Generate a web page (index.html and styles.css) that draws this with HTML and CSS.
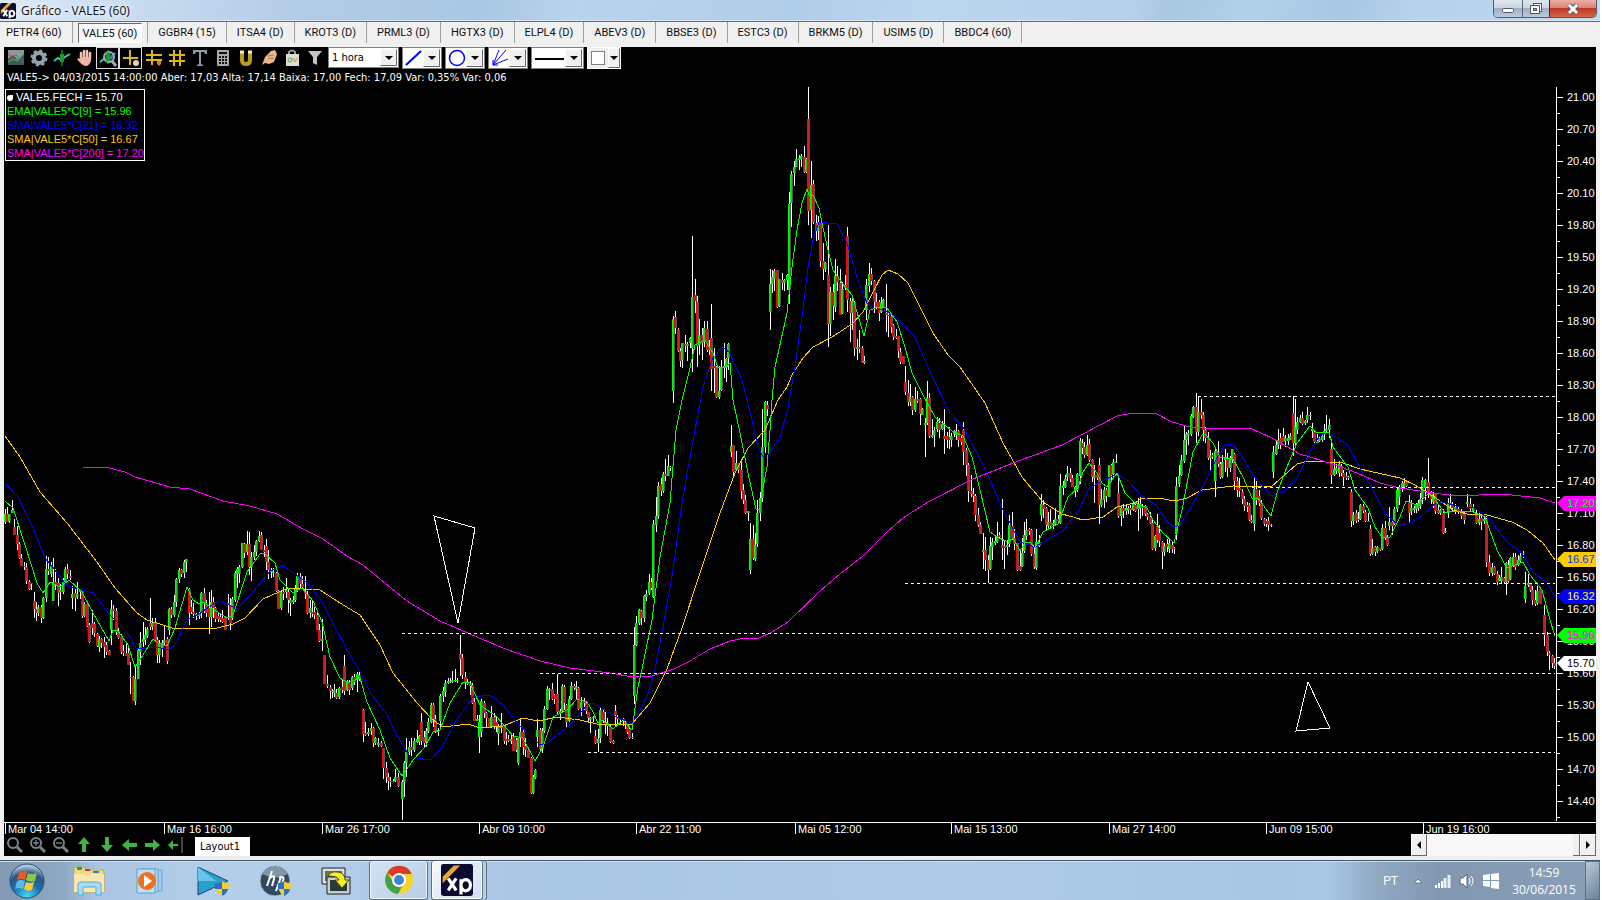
FILE: index.html
```
<!DOCTYPE html>
<html lang="pt">
<head>
  <meta charset="UTF-8">
  <meta name="viewport" content="width=device-width, initial-scale=1.0">
  <title>Gráfico - VALE5 (60)</title>
  <link rel="stylesheet" href="styles.css">
</head>

<body>
  <!-- Title bar -->
  <header class="titlebar">
    <svg class="app-logo" width="16" height="16" viewBox="0 0 40 40">
      <rect width="40" height="40" rx="4" fill="#0b0b30"/>
      <path d="M2 18 L20 0 L30 0 L2 28Z" fill="#e9a93a"/>
      <path d="M8 17L18 33M18 17L8 33" stroke="#fff" stroke-width="5"/>
      <path d="M24 38V19M24 25a6 7 0 1 1 0 3" stroke="#fff" stroke-width="5" fill="none"/>
    </svg>
    <h1 class="title">Gráfico - VALE5 (60)</h1>
    <div class="win-buttons">
      <button class="win-btn" aria-label="Minimizar">
        <svg width="14" height="12"><rect x="1.5" y="5.5" width="11" height="4" rx="1" fill="#fff" stroke="#535666"/></svg>
      </button>
      <button class="win-btn restore" aria-label="Restaurar">
        <svg width="14" height="13"><rect x="4.500" y="1.500" width="8" height="8" fill="#fff" stroke="#535666"/><rect x="1.500" y="3.500" width="9" height="8" fill="#fff" stroke="#535666"/><rect x="4.500" y="6.500" width="3" height="2" fill="#9ab" stroke="#535666"/></svg>
      </button>
      <button class="win-btn close" aria-label="Fechar">
        <svg width="14" height="12"><path d="M3 2L11 10M11 2L3 10" stroke="#535666" stroke-width="5"/><path d="M3 2L11 10M11 2L3 10" stroke="#fff" stroke-width="3"/></svg>
      </button>
    </div>
  </header>

  <!-- Symbols -->
  <nav class="tabs">
    <button class="tab">PETR4 (60)</button>
    <button class="tab active"><span>VALE5 (60)</span></button>
    <button class="tab">GGBR4 (15)</button>
    <button class="tab">ITSA4 (D)</button>
    <button class="tab">KROT3 (D)</button>
    <button class="tab">PRML3 (D)</button>
    <button class="tab">HGTX3 (D)</button>
    <button class="tab">ELPL4 (D)</button>
    <button class="tab">ABEV3 (D)</button>
    <button class="tab">BBSE3 (D)</button>
    <button class="tab">ESTC3 (D)</button>
    <button class="tab">BRKM5 (D)</button>
    <button class="tab">USIM5 (D)</button>
    <button class="tab">BBDC4 (60)</button>
  </nav>

  <main class="terminal">
    <div class="toolbar">
      <button class="tool" aria-label="Gráfico">
        <svg width="18" height="18"><rect x="1" y="1" width="16" height="15" fill="#8a9a9c"/><path d="M1 10L6 6L11 11L17 5V16H1Z" fill="#44585c"/><path d="M1 4L5 9L9 6L17 14" stroke="#f22" fill="none"/><path d="M1 13L6 10L10 12L17 4" stroke="#2d2" fill="none"/></svg>
      </button>
      <button class="tool" aria-label="Configurar">
        <svg width="18" height="18"><circle cx="9" cy="9" r="5" fill="none" stroke="#8fa3a8" stroke-width="4"/><circle cx="9" cy="9" r="7" fill="none" stroke="#8fa3a8" stroke-width="3" stroke-dasharray="3 2.500"/></svg>
      </button>
      <button class="tool" aria-label="Indicador">
        <svg width="18" height="18"><path d="M1 12L5 9L8 11L12 8L17 5" stroke="#2fd0c0" stroke-width="2" fill="none"/><path d="M9 1V17" stroke="#2c3"/><rect x="7" y="5" width="4" height="8" fill="#1a9a2a"/></svg>
      </button>
      <button class="tool" aria-label="Mover">
        <svg width="18" height="18"><path d="M5 10V4M8 9V2M11 9V2M14 10V4" stroke="#f3c3b6" stroke-width="2.500" stroke-linecap="round"/><path d="M4 8H15V12Q13 17 10 17Q6 17 1 10Q3 8 5 11Z" fill="#eeb5a8"/></svg>
      </button>
      <button class="tool on" aria-label="Lupa">
        <svg width="18" height="18"><path d="M1 13L5 10L9 12L16 4" stroke="#2fd0c0" stroke-width="2" fill="none"/><circle cx="10" cy="8" r="5" fill="#456" fill-opacity=".6" stroke="#9ab" stroke-width="2"/><path d="M13 12L17 17" stroke="#9ab" stroke-width="3"/><path d="M9 1V15" stroke="#2c3"/><rect x="7" y="4" width="4" height="8" fill="#1a9a2a"/></svg>
      </button>
      <button class="tool on" aria-label="Cursor">
        <svg width="18" height="18"><path d="M8 1V16M1 9H16" stroke="#d9b818" stroke-width="2"/><circle cx="14" cy="14" r="3" fill="#f0c8b8"/></svg>
      </button>
      <button class="tool" aria-label="Linhas">
        <svg width="18" height="18"><path d="M7 1V16M1 6H17M1 11H17" stroke="#d9b818" stroke-width="2"/><path d="M12 12h4v3l-2 2-2-2z" fill="#f07810"/></svg>
      </button>
      <button class="tool" aria-label="Grade">
        <svg width="18" height="18"><path d="M6 1V17M12 1V17M1 6H17M1 12H17" stroke="#d9b818" stroke-width="2"/></svg>
      </button>
      <button class="tool" aria-label="Texto">
        <svg width="18" height="18"><path d="M2 1H16V5H14L13 3H10V15L12 16V17H6V16L8 15V3H5L4 5H2Z" fill="#8b9da2"/></svg>
      </button>
      <button class="tool" aria-label="Calculadora">
        <svg width="18" height="18"><rect x="3" y="1" width="12" height="16" rx="1" fill="#a9a9a9"/><path d="M5 4H13" stroke="#111" stroke-width="2"/><path d="M5 8H13M5 11H13M5 14H13" stroke="#111" stroke-width="2" stroke-dasharray="2 1"/></svg>
      </button>
      <button class="tool" aria-label="Imã">
        <svg width="18" height="18"><path d="M5 2V11Q5 15 9 15Q13 15 13 11V2" stroke="#b99a1a" stroke-width="4" fill="none"/><path d="M3 3H7M11 3H15" stroke="#f4efb8" stroke-width="3"/></svg>
      </button>
      <button class="tool" aria-label="Borracha">
        <svg width="18" height="18"><path d="M2 16L5 8L11 2L15 1L17 5L14 13L9 15L5 14Z" fill="#e8b888"/><path d="M8 7L14 6M8 10L14 9" stroke="#b87848"/></svg>
      </button>
      <button class="tool" aria-label="Compra e venda">
        <svg width="18" height="18"><path d="M6 6V3Q9 0 12 3V6" stroke="#999" stroke-width="2" fill="none"/><rect x="3" y="5" width="13" height="12" fill="#dcdcd4"/><circle cx="7" cy="11" r="2" fill="none" stroke="#5a5"/><path d="M10 9L12 13L14 9" stroke="#e82" fill="none"/></svg>
      </button>
      <button class="tool" aria-label="Filtro">
        <svg width="18" height="18"><path d="M2 2H16L11 8V16L7 14V8Z" fill="#c4c4c4"/></svg>
      </button>

      <label class="period">
        <select aria-label="Periodicidade"><option>1 hora</option></select>
        <span class="drop"></span>
      </label>
      <button class="combo" aria-label="Linha">
        <svg width="19" height="18"><path d="M2 16L17 2" stroke="#00f" stroke-width="2"/></svg><span class="drop"></span>
      </button>
      <button class="combo" aria-label="Círculo">
        <svg width="19" height="18"><circle cx="10" cy="9" r="7.500" fill="none" stroke="#00f" stroke-width="1.500"/></svg><span class="drop"></span>
      </button>
      <button class="combo" aria-label="Leque">
        <svg width="19" height="18"><path d="M3 16L9 1M3 16L16 1M3 16L18 10" stroke="#00f" fill="none"/><path d="M3 11V16H8" stroke="#00f" fill="none"/></svg><span class="drop"></span>
      </button>
      <button class="combo wide" aria-label="Espessura">
        <svg width="32" height="18"><path d="M2 10H31" stroke="#000" stroke-width="2"/></svg><span class="drop"></span>
      </button>
      <button class="combo color" aria-label="Cor">
        <i class="swatch"></i><span class="drop"></span>
      </button>
    </div>

    <p class="quote">VALE5-&gt; 04/03/2015 14:00:00 Aber: 17,03 Alta: 17,14 Baixa: 17,00 Fech: 17,09 Var: 0,35% Var: 0,06</p>

    <div class="plot">
      <svg id="chart" viewBox="4 86 1592 748"></svg>
      <ul class="legend">
        <li class="white"><i class="mark"></i>VALE5.FECH = 15.70</li>
        <li class="green">EMA|VALE5*C[9] = 15.96</li>
        <li class="blue">SMA|VALE5*C[21] = 16.32</li>
        <li class="gold">SMA|VALE5*C[50] = 16.67</li>
        <li class="pink">SMA|VALE5*C[200] = 17.20</li>
      </ul>
    </div>

    <div class="bottombar">
      <button class="nav" aria-label="Zoom"><svg width="18" height="18"><circle cx="7" cy="7" r="5" fill="none" stroke="#76868a" stroke-width="2"/><path d="M11 11L16 16" stroke="#76868a" stroke-width="3"/></svg></button>
      <button class="nav" aria-label="Mais zoom"><svg width="18" height="18"><circle cx="7" cy="7" r="5" fill="none" stroke="#76868a" stroke-width="2"/><path d="M11 11L16 16" stroke="#76868a" stroke-width="3"/><path d="M4 7H10M7 4V10" stroke="#aab"/></svg></button>
      <button class="nav" aria-label="Menos zoom"><svg width="18" height="18"><circle cx="7" cy="7" r="5" fill="none" stroke="#76868a" stroke-width="2"/><path d="M11 11L16 16" stroke="#76868a" stroke-width="3"/><path d="M4 7H10" stroke="#aab"/></svg></button>
      <button class="nav" aria-label="Para cima"><svg width="18" height="18"><path d="M9 1L15 8H11V16H7V8H3Z" fill="#3db544"/></svg></button>
      <button class="nav" aria-label="Para baixo"><svg width="18" height="18"><path d="M9 16L15 9H11V1H7V9H3Z" fill="#3db544"/></svg></button>
      <button class="nav" aria-label="Esquerda"><svg width="18" height="18"><path d="M1 9L8 3V7H16V11H8V15Z" fill="#3db544"/></svg></button>
      <button class="nav" aria-label="Direita"><svg width="18" height="18"><path d="M16 9L9 3V7H1V11H9V15Z" fill="#3db544"/></svg></button>
      <button class="nav" aria-label="Início"><svg width="18" height="18"><path d="M1 9L6 4V8H11V10H6V14Z" fill="#3db544"/><path d="M15 1V17" stroke="#888"/></svg></button>
      <button class="layout-tab">Layout1</button>
      <div class="scroll">
        <button class="scroll-btn left" aria-label="Rolar à esquerda"></button>
        <span class="thumb"></span>
        <button class="scroll-btn right" aria-label="Rolar à direita"></button>
      </div>
    </div>
  </main>

  <!-- Windows taskbar -->
  <footer class="taskbar">
    <button class="task start" aria-label="Iniciar">
      <svg width="36" height="36" viewBox="0 0 36 36">
        <defs><radialGradient id="orb" cx=".5" cy=".95" r=".9"><stop offset="0" stop-color="#3fe0ff"/><stop offset=".45" stop-color="#1b6fae"/><stop offset=".75" stop-color="#2a5580"/><stop offset="1" stop-color="#b5cde0"/></radialGradient></defs>
        <circle cx="18" cy="18" r="17" fill="url(#orb)" stroke="#2b4f73"/>
        <path d="M10 10Q14 7 18 9L16 17Q12 15 8 17Z" fill="#ee5a24"/>
        <path d="M19 10Q23 12 28 10L26 18Q21 20 17 17Z" fill="#8cc83c"/>
        <path d="M8 18Q12 16 16 18L14 26Q10 24 6 26Z" fill="#5bb8f0"/>
        <path d="M17 19Q21 21 25 19L23 27Q18 29 15 26Z" fill="#fccc2c"/>
      </svg>
    </button>
    <button class="task" aria-label="Explorador">
      <svg width="34" height="32" viewBox="0 0 34 32"><path d="M2 4Q2 2 4 2H12L14 5H30Q32 5 32 7V27H2Z" fill="#f2d98a" stroke="#c9a94e"/><path d="M5 2h5v3H5z" fill="#2a3"/><path d="M13 4h5v2h-5z" fill="#d33"/><path d="M21 6h6v2h-6z" fill="#28c"/><path d="M2 9H32V27H2Z" fill="#f8e8ac"/><path d="M6 20Q6 17 9 17H26Q29 17 29 20V30H24V22H11V30H6Z" fill="#a9dcf4" stroke="#5aa9d0"/></svg>
    </button>
    <button class="task" aria-label="Media Player">
      <svg width="32" height="30" viewBox="0 0 32 30"><path d="M10 4H27V25H10Z" fill="#9fcbe8" stroke="#6fa8d0"/><path d="M6 3H23V26H6Z" fill="#aed4ee" stroke="#6fa8d0"/><path d="M2 3H20V27H2Z" fill="#bcdff5" stroke="#5f9fca"/><circle cx="12" cy="15" r="9" fill="#f0701c"/><path d="M9 9L17 15L9 21Z" fill="#fff"/></svg>
    </button>
    <button class="task" aria-label="Player">
      <svg width="34" height="32" viewBox="0 0 34 32"><path d="M2 2L32 16L2 30Z" fill="#2a9fd0" stroke="#246"/><path d="M2 2L20 16L2 16Z" fill="#69c4ea"/><path d="M19 18Q24 18 26 16Q28 18 33 18Q33 28 26 31Q19 28 19 18Z" fill="#f8cc2c"/><path d="M26 16Q24 18 19 18V24H26ZM26 24H32Q31 29 26 31Z" fill="#2a6fc8"/></svg>
    </button>
    <button class="task" aria-label="HP">
      <svg width="34" height="32" viewBox="0 0 34 32"><circle cx="17" cy="16" r="15" fill="#33495f" stroke="#aab8c4"/><path d="M4 9A15 15 0 0 1 30 9Q17 16 4 9Z" fill="#7f95a8"/><path d="M14 6L9 21M12 13Q17 9 16 14L14 21M23 12L18 26M21 13Q27 10 25 16Q23 22 19 20" stroke="#fff" stroke-width="2" fill="none"/><path d="M20 18Q24 18 26 16Q28 18 33 18Q33 28 26 31Q20 28 20 18Z" fill="#f8cc2c"/><path d="M26 16Q24 18 20 18V24H26ZM26 24H32Q31 29 26 31Z" fill="#2a6fc8"/></svg>
    </button>
    <button class="task" aria-label="Fotos">
      <svg width="34" height="30" viewBox="0 0 34 30"><path d="M2 2H25V18H2Z" fill="#ddd" stroke="#222"/><path d="M5 5H22V15H5Z" fill="#576"/><path d="M7 11H30V28H7Z" fill="#ccc" stroke="#222"/><path d="M10 14H27V25H10Z" fill="#253c38"/><path d="M8 10Q10 5 18 6Q25 7 25 14H29L22 22L15 14H19Q18 10 8 10Z" fill="#f8ee20" stroke="#443"/></svg>
    </button>
    <button class="task open" aria-label="Chrome">
      <svg width="30" height="30" viewBox="0 0 30 30"><circle cx="15" cy="15" r="14" fill="#f8d12c"/><path d="M15 15L3 8A14 14 0 0 1 28 9H15Z" fill="#dc3a2c"/><path d="M3 8A14 14 0 0 0 14 29L20 18L10 18Z" fill="#3fa34a"/><circle cx="15" cy="15" r="7" fill="#fff"/><circle cx="15" cy="15" r="5" fill="#3f83d4"/></svg>
    </button>
    <button class="task open stack" aria-label="XP">
      <svg width="32" height="32" viewBox="0 0 40 40"><rect width="40" height="40" rx="3" fill="#0b0b30"/><path d="M2 16L16 2H24L2 24Z" fill="#e9a93a"/><path d="M9 18L19 33M19 18L9 33" stroke="#fff" stroke-width="4"/><path d="M25 38V19M25 25a6 7 0 1 1 0 3" stroke="#fff" stroke-width="4" fill="none"/></svg>
    </button>
    <div class="tray">
      <span class="lang">PT</span>
      <svg class="tray-up" width="10" height="6"><path d="M1 5L5 1L9 5Z" fill="#fff" stroke="#678"/></svg>
      <svg width="18" height="16"><path d="M2 15V12M5 15V10M8 15V8" stroke="#fff" stroke-width="2"/><path d="M11 15V5M15 15V2" stroke="#e8eef4" stroke-width="3"/></svg>
      <svg width="18" height="16"><path d="M2 5H5L9 1V15L5 11H2Z" fill="#fff" stroke="#567"/><path d="M11 5Q13 8 11 11M13 3Q17 8 13 13" stroke="#fff" fill="none"/></svg>
      <svg width="18" height="16"><path d="M1 2L8 1V7H1ZM9 1L17 0V7H9ZM1 8H8V14L1 13ZM9 8H17V16L9 15Z" fill="#fff"/></svg>
      <div class="clock"><span>14:59</span><span>30/06/2015</span></div>
      <button class="show-desktop" aria-label="Mostrar área de trabalho"></button>
    </div>
  </footer>

  <script src="chart.js"></script>
</body>
</html>
```

FILE: styles.css
```
* {
    box-sizing: border-box;
}

body {
    margin: 0;
    padding-right: 2px;
    background-color: #fff;
    font-family: Roboto, sans-serif;
    font-size: 12px;
}

button {
    font-family: inherit;
    font-size: inherit;
    margin: 0;
    padding: 0;
    border: 0;
    background: none;
}

svg {
    display: block;
}

/* title bar */
.titlebar {
    display: flex;
    align-items: center;
    gap: 5px;
    height: 22px;
    border-bottom: 1px solid #5d6b7c;
    box-shadow: inset 0 -1px 0 #dbe8f6;
    background: linear-gradient(100deg, #dbe9f7 0, #c9ddf1 8%, #b4cde6 18%, #a9c7e4 30%, #b8d3ec 36%, #b0cde9 50%, #bcd6ee 58%, #b5cfea 71%, #a9c6e2 73%, #b3d0ea 78%, #a9c7e4 84%, #b5d1ec 88%, #c3d9f0 100%);
}

.title {
    flex: 1;
    margin: 0;
    font-family: "Open Sans", sans-serif;
    font-size: 12px;
    font-weight: 400;
    line-height: 20px;
    color: #111;
    text-shadow: 0 0 6px #fff, 0 0 6px #fff;
}

.win-buttons {
    display: flex;
    align-self: flex-start;
    height: 18px;
    margin-right: 3px;
    border: 1px solid #4f5b6b;
    border-top: 0;
    border-radius: 0 0 5px 5px;
    overflow: hidden;
}

.win-btn {
    display: flex;
    align-items: center;
    justify-content: center;
    width: 28px;
    background: linear-gradient(#dfe8f1 0, #cbd6e2 45%, #9fb0c3 50%, #b9cbdd 100%);
}

.win-btn.restore {
    width: 27px;
    border-left: 1px solid #5b6878;
}

.win-btn.close {
    width: 47px;
    border-left: 1px solid #5b1a14;
    background: linear-gradient(#eab0a6 0, #dd8474 45%, #bf3a22 50%, #cf6444 100%);
}

/* symbol tabs */
.tabs {
    display: flex;
    align-items: flex-start;
    height: 25px;
    background-color: #f0f0f0;
}

.tab {
    height: 21px;
    padding: 0 10px;
    border-right: 1px solid #a0a0a0;
    font-size: 11px;
    line-height: 20px;
    color: #111;
}

.tab:first-child {
    padding-left: 6px;
}

.tab.active {
    padding: 0 5px;
}

.tab.active span {
    display: block;
    height: 20px;
    margin-top: 1px;
    padding: 0 4px;
    border: 1px solid #fff;
    border-top-color: #696969;
    border-left-color: #696969;
    background-color: #f8f8f8;
}

/* black work area */
.terminal {
    padding: 0 4px;
    border-bottom: 4px solid #eee;
    background: linear-gradient(#000, #000) content-box, #f0f0f0;
    color: #fff;
}

.toolbar {
    display: flex;
    height: 22px;
}

.tool {
    display: flex;
    align-items: center;
    justify-content: center;
    width: 23px;
    border: 1px solid transparent;
}

.tool.on {
    border-color: #ddd;
}

.period {
    display: flex;
    width: 71px;
    height: 21px;
    margin-left: 2px;
    padding: 1px;
    border: 1px solid #808080;
    background-color: #fff;
}

.period select {
    flex: 1;
    min-width: 0;
    padding: 0 2px;
    border: 0;
    appearance: none;
    background: none;
    font-family: "DejaVu Sans Condensed", sans-serif;
    font-size: 11px;
    color: #000;
}

.drop {
    display: flex;
    align-items: center;
    justify-content: center;
    width: 17px;
    border: 1px solid #fff;
    border-right-color: #696969;
    border-bottom-color: #696969;
    background-color: #f0f0f0;
}

.drop::after {
    content: "";
    border: 4px solid transparent;
    border-top-color: #000;
    border-bottom: 0;
}

.combo {
    display: flex;
    justify-content: space-between;
    width: 40px;
    height: 22px;
    margin-left: 3px;
    padding: 1px;
    border: 1px solid #808080;
    background-color: #fff;
}

.combo.wide {
    width: 53px;
}

.combo.color {
    width: 34px;
    padding: 0;
    border-color: #fff;
    background-color: #f0f0f0;
}

.color .drop {
    width: 12px;
}

.swatch {
    width: 14px;
    height: 14px;
    margin: 3px;
    border: 1px solid #808080;
    background-color: #fff;
}

.quote {
    margin: 0;
    padding-left: 3px;
    font-family: "DejaVu Sans Condensed", sans-serif;
    font-size: 11px;
    line-height: 17px;
}

/* chart */
.plot {
    position: relative;
}

#chart {
    width: 100%;
    height: auto;
    font-family: "Liberation Sans", sans-serif;
    font-size: 11px;
}

.legend {
    position: absolute;
    top: 3px;
    left: 1px;
    width: 140px;
    margin: 0;
    padding: 0 1px;
    border: 1px solid #fff;
    background-color: #000;
    list-style: none;
    font-family: "Liberation Sans", sans-serif;
    font-size: 11px;
    line-height: 14px;
    white-space: nowrap;
}

.mark {
    display: inline-block;
    width: 6px;
    height: 6px;
    margin-right: 3px;
    border-radius: 3px 0 3px 3px;
    background-color: #fff;
}

.white { color: #fff; }
.green { color: #0f0; }
.blue { color: #00f; }
.gold { color: #fc0; }
.pink { color: #f0f; }

.bottombar {
    display: flex;
    align-items: center;
    height: 22px;
    padding-left: 2px;
}

.nav {
    width: 23px;
}

.layout-tab {
    align-self: flex-end;
    width: 55px;
    height: 19px;
    margin-left: 5px;
    padding-left: 5px;
    background-color: #fff;
    font-family: "DejaVu Sans Condensed", sans-serif;
    font-size: 11px;
    text-align: left;
    color: #000;
}

.scroll {
    display: flex;
    align-self: stretch;
    width: 185px;
    margin-left: auto;
    background-color: #f8f8f8;
}

.scroll-btn {
    display: flex;
    align-items: center;
    justify-content: center;
    width: 16px;
    border: 1px solid #fff;
    border-right-color: #696969;
    border-bottom-color: #696969;
    background-color: #f0f0f0;
}

.scroll-btn::after {
    content: "";
    border: 4px solid transparent;
}

.scroll-btn.left::after {
    border-right-color: #000;
    border-left: 0;
}

.scroll-btn.right::after {
    border-left-color: #000;
    border-right: 0;
}

.thumb {
    width: 7px;
    margin-left: auto;
    border-right: 1px solid #696969;
    border-bottom: 1px solid #696969;
    background-color: #f0f0f0;
}

/* taskbar */
.taskbar {
    display: flex;
    align-items: stretch;
    height: 40px;
    border-top: 1px solid #46566a;
    box-shadow: inset 0 1px 0 #cfe0f0;
    background: linear-gradient(90deg, #8199b2 0, #8fa9c4 4%, #a9c5e2 6%, #b3cfea 14%, #a9c6e4 35%, #afcbe8 60%, #a7c6e4 80%, #a9c8e6 83%, #8fa9c4 86%, #8298b0 90%, #889fb8 100%);
}

.task {
    display: flex;
    align-items: center;
    justify-content: center;
    width: 62px;
}

.task.start {
    width: 54px;
    margin-right: 4px;
}

.task.open {
    width: 59px;
    border: 1px solid #5c7288;
    border-top: 0;
    border-radius: 3px;
    box-shadow: inset 0 0 0 1px #eef5fc;
    background: linear-gradient(135deg, #d5e3f1, #b6cde6);
}

.task.stack {
    width: 52px;
    margin-left: 3px;
    background: linear-gradient(135deg, #f4f8fc, #cfe0f1);
    box-shadow: inset 0 0 0 1px #fff, 3px 0 0 #b8cfe6, 4px 0 0 #5c7288;
}

.task:nth-child(6) {
    margin-right: 1px;
}

.tray {
    display: flex;
    align-items: center;
    gap: 6px;
    margin-left: auto;
    color: #fff;
}

.lang {
    margin-right: 9px;
}

.tray-up {
    margin-right: 5px;
}

.clock {
    display: flex;
    flex-direction: column;
    align-items: center;
    width: 76px;
    font-family: "Open Sans", sans-serif;
    font-size: 12px;
    line-height: 17px;
}

.tray > .show-desktop {
    align-self: stretch;
    width: 15px;
    margin-left: -3px;
    border: 1px solid #5c7288;
    background: linear-gradient(135deg, #b8c8d8, #6d8298);
}
```

FILE: chart.js
```
const chart = document.getElementById('chart')

// x, high, low, body top, body bottom, g (up) / r (down)
const candles = `
5 509 524 514 522 g,7 507 522 514 522 r,9 514 523 514 521 g,12 500 513 510 513 g,14 519 535 527 535 r,17 526 550 535 544 r,19 542 559 544 558 r,21 554 566 558 566 r,24 562 570 566 567 r,26 563 584 567 581 r,29 580 590 582 589 r,31 583 590 583 584 r,
34 592 618 601 609 r,36 602 621 609 613 r,38 605 616 607 613 g,41 605 623 607 618 r,43 597 619 598 618 g,46 556 602 569 598 g,48 557 575 569 571 r,51 562 577 566 574 g,53 558 601 582 601 g,55 569 590 582 585 r,58 578 606 583 593 r,60 584 600 590 592 g,
63 578 594 582 592 g,65 567 584 569 582 g,67 564 579 569 574 r,70 570 580 576 578 r,72 586 609 594 598 g,75 589 611 593 598 r,77 582 599 594 597 g,80 589 599 590 592 g,82 590 618 591 616 r,84 602 617 604 616 g,87 602 627 604 626 r,89 623 643 625 642 r,
92 610 635 623 628 r,94 622 637 624 633 r,97 633 647 634 646 r,99 636 652 639 647 g,101 638 648 639 643 r,104 637 658 642 647 r,106 642 655 645 652 r,109 650 655 651 655 r,111 600 645 609 630 g,113 605 620 609 611 r,116 608 635 611 632 r,118 628 639 631 638 r,
121 634 654 637 652 r,123 645 656 651 653 r,126 642 656 653 656 r,128 647 665 653 665 r,130 662 694 677 678 r,133 676 701 677 701 r,135 667 705 679 701 g,138 648 679 650 679 g,140 632 665 643 652 g,143 622 647 639 642 g,145 627 645 635 640 g,147 627 638 629 636 g,
150 598 630 623 627 r,152 618 630 623 627 g,155 618 642 623 640 r,157 637 663 640 655 r,159 640 663 643 655 g,162 640 657 643 648 g,164 626 645 640 643 g,167 637 664 639 661 r,169 608 635 609 630 g,171 607 618 609 615 r,174 595 617 602 615 g,176 578 607 579 602 g,
179 568 583 570 579 g,181 569 577 570 574 r,184 560 578 562 573 g,186 559 572 559 562 g,189 588 625 589 613 r,191 600 614 607 612 r,193 603 618 612 614 r,196 613 620 614 616 g,199 612 619 614 616 g,201 592 618 593 613 g,204 588 613 593 603 r,206 600 617 603 613 r,
209 592 634 608 617 r,211 590 627 602 617 g,213 597 618 602 608 r,215 607 622 608 619 r,218 613 622 616 619 r,220 613 622 617 620 r,222 610 623 618 622 r,225 616 630 617 630 r,228 594 620 603 605 r,230 598 630 606 623 r,232 597 620 599 618 g,235 571 602 573 600 g,
237 567 588 569 574 g,239 565 583 567 574 g,242 543 568 543 567 g,244 543 558 544 553 r,247 531 555 544 552 g,249 532 575 544 567 r,251 552 581 557 567 g,254 545 560 552 557 g,256 540 556 541 552 g,259 531 542 536 541 g,261 532 550 535 550 r,264 545 557 550 552 r,
266 539 570 546 562 r,268 550 579 562 570 r,271 568 578 570 572 g,273 568 577 572 573 g,276 572 592 573 591 r,278 590 609 591 609 r,281 590 610 592 608 g,283 587 600 592 594 r,286 578 598 590 592 g,288 588 613 592 600 r,290 598 616 600 603 g,293 596 604 600 602 g,
295 585 602 588 600 g,297 573 592 576 590 g,300 573 588 577 584 r,302 576 588 584 587 r,305 576 599 591 594 r,307 591 614 594 613 r,310 600 618 608 613 g,312 601 617 612 614 r,314 607 619 612 615 r,317 610 630 615 630 r,319 624 642 630 641 r,322 619 651 639 641 g,
324 655 684 655 684 r,327 675 688 684 686 r,330 685 699 687 691 r,332 689 698 691 692 r,334 684 697 690 693 g,336 689 699 693 698 r,339 687 699 688 697 g,342 680 693 687 690 r,344 655 695 666 691 r,347 680 691 681 690 g,349 680 695 683 690 r,352 676 690 677 688 g,
354 674 685 677 682 r,357 672 692 674 680 g,359 670 681 675 679 g,363 709 742 710 734 r,365 722 736 733 735 r,368 728 736 732 734 g,371 723 735 728 731 g,373 727 747 728 743 r,375 737 745 738 743 g,378 738 747 743 745 g,381 741 747 743 746 r,383 748 779 748 768 r,
386 762 783 768 777 r,388 773 790 777 781 r,390 777 787 781 782 r,393 779 782 781 782 r,395 769 782 777 781 g,398 773 787 777 786 r,402 780 820 782 799 g,404 761 797 763 782 g,406 738 777 752 763 g,409 741 757 747 752 g,411 738 756 747 750 r,414 738 752 741 750 g,
417 730 743 739 742 g,419 735 745 736 742 g,421 713 745 722 741 r,424 731 747 737 743 r,426 728 747 731 742 g,428 718 733 722 731 g,431 703 723 705 722 g,433 703 727 705 719 r,435 715 733 719 732 r,438 728 736 730 732 g,440 694 727 696 721 g,443 687 702 691 696 g,
445 680 697 683 692 g,448 678 684 681 683 g,450 678 683 681 682 g,452 671 683 680 682 g,455 669 682 680 681 g,457 678 683 680 681 g,460 635 676 654 659 r,462 654 679 658 675 r,465 672 689 677 682 r,467 679 685 682 684 r,470 681 695 683 686 r,472 683 704 685 703 r,
474 698 721 702 721 r,477 715 721 719 721 g,479 715 753 722 737 g,481 699 737 701 732 g,484 701 718 703 713 r,486 712 727 713 718 r,489 718 728 718 727 r,491 706 728 717 727 g,494 713 729 717 727 r,496 717 732 722 727 r,498 724 745 727 734 g,501 713 733 725 728 g,
504 725 744 727 741 r,506 732 745 739 741 r,508 735 742 739 741 r,511 733 744 739 741 g,513 733 751 736 751 r,516 738 752 740 750 r,518 737 765 738 763 g,520 720 747 732 738 g,523 729 755 732 747 r,525 738 757 746 750 r,528 747 758 750 758 r,531 757 794 758 793 r,
533 775 794 777 793 g,535 769 779 770 778 g,537 719 747 730 737 g,540 728 750 730 749 r,542 728 753 731 749 g,544 706 733 709 731 g,547 686 710 689 709 g,549 688 700 689 691 g,552 683 700 689 699 r,554 694 704 695 699 r,557 674 715 694 712 r,560 709 720 711 713 g,
562 684 713 686 711 g,564 685 710 687 703 r,566 704 727 705 722 r,569 696 722 699 721 g,571 682 700 686 699 g,574 684 690 686 688 r,576 681 700 687 689 g,578 687 710 688 709 r,581 697 716 702 708 g,584 698 710 701 703 r,586 701 714 703 711 r,588 712 723 712 718 r,
590 717 733 718 720 g,593 716 722 717 718 g,595 730 744 736 743 r,598 729 752 739 743 g,600 707 743 710 738 g,603 710 723 712 720 r,605 712 734 722 724 r,607 718 736 723 726 r,610 725 743 727 742 r,613 740 744 741 743 r,615 705 727 711 715 r,617 715 726 717 719 r,
620 718 724 719 720 r,623 718 726 719 721 r,625 721 729 722 724 r,627 725 734 726 732 r,629 728 739 729 738 r,632 733 739 737 738 r,634 627 704 645 696 g,636 616 646 623 645 g,639 609 625 610 623 g,641 610 625 611 618 r,644 595 622 596 618 g,646 590 601 594 597 g,
649 574 595 582 593 g,651 578 590 582 588 r,653 520 598 524 597 g,656 497 532 516 525 g,658 482 519 486 516 g,661 478 496 484 491 r,663 472 493 474 491 g,665 459 481 474 476 r,668 455 476 466 476 g,670 466 471 467 468 r,673 316 403 319 391 g,675 311 334 317 328 r,
678 328 352 329 351 r,680 348 367 351 361 r,682 343 368 343 360 g,685 335 352 344 346 r,687 342 361 344 346 g,690 337 348 338 343 g,692 236 372 297 348 g,695 279 313 295 301 r,697 296 367 302 346 r,699 319 355 335 345 g,702 328 360 335 343 r,704 321 347 328 342 g,
707 321 352 329 350 r,709 340 355 348 350 r,711 304 391 338 369 r,714 348 393 366 368 r,716 366 398 367 397 r,719 366 399 391 397 g,721 360 391 367 390 g,724 343 378 366 368 g,726 358 382 359 367 g,728 343 370 344 358 g,731 425 457 446 452 g,733 445 478 445 472 r,
736 451 471 463 470 g,738 463 473 463 470 r,741 460 499 470 491 r,743 484 504 490 500 r,745 495 514 500 513 r,748 511 521 511 513 g,750 523 574 539 570 g,753 525 560 539 558 r,755 533 561 545 559 g,757 500 547 513 544 g,760 492 521 498 513 g,762 409 502 447 498 g,
765 401 453 402 447 g,767 401 416 405 409 r,770 269 330 284 312 g,772 270 293 277 284 g,774 269 291 271 279 g,777 270 308 270 307 r,779 279 307 279 306 g,782 273 290 280 283 r,784 279 291 280 283 g,787 274 290 275 280 g,789 192 304 204 290 g,791 171 227 174 203 g,
794 161 186 167 173 g,796 149 167 159 167 g,799 155 170 158 160 g,801 154 167 156 159 g,804 146 173 157 172 r,806 158 173 159 172 g,808 87 225 119 211 r,811 161 238 185 210 g,813 180 224 184 222 r,816 215 241 223 231 r,818 216 240 222 231 g,820 222 267 223 261 r,
823 243 280 261 269 r,825 262 272 263 269 g,828 225 347 275 324 r,830 287 336 292 324 g,833 284 320 292 306 r,835 259 312 276 307 g,837 266 291 276 282 r,840 269 315 283 315 r,842 282 314 289 313 g,845 275 290 285 288 r,847 227 312 236 300 r,850 298 342 301 313 r,
852 297 330 301 313 g,854 301 356 302 348 r,857 339 360 347 349 g,859 330 353 347 349 r,862 346 363 348 363 r,864 356 364 361 363 g,866 279 320 285 310 g,869 263 292 274 286 g,871 268 285 274 281 r,874 280 313 281 302 r,876 293 310 302 307 r,879 300 321 302 313 r,
881 297 313 303 312 g,883 299 308 300 307 g,886 284 332 313 315 r,888 313 337 315 316 r,891 314 333 316 327 r,893 324 340 325 337 r,896 329 339 336 338 r,898 336 358 336 351 r,900 348 364 352 362 r,903 356 364 356 364 r,905 366 395 382 392 r,908 380 406 393 402 r,
910 384 406 397 402 g,912 396 415 397 410 r,915 387 412 399 410 g,917 391 403 399 401 r,920 398 425 399 414 r,922 408 415 409 415 g,925 418 457 423 425 g,927 381 425 398 423 g,929 393 438 398 436 r,932 419 438 435 437 g,934 427 447 430 435 g,937 417 432 422 429 g,
939 418 438 423 430 r,942 421 430 424 429 g,944 409 454 436 439 r,947 432 448 436 440 r,949 427 449 437 440 r,951 433 447 436 440 g,954 430 437 431 434 g,956 424 440 431 435 g,958 430 447 431 440 r,961 435 445 438 442 r,963 422 465 430 452 r,966 448 476 450 465 r,
968 463 502 465 491 r,971 475 497 491 494 r,973 488 502 494 496 r,975 494 521 496 515 r,978 508 527 515 525 r,980 522 534 525 534 r,983 533 569 550 552 g,985 537 571 550 560 r,988 555 583 560 570 r,990 537 570 546 569 g,992 538 560 542 547 g,995 537 545 541 543 g,
997 522 543 536 542 g,999 532 539 535 537 r,1002 499 560 545 548 r,1004 540 569 546 548 r,1007 540 555 545 547 g,1009 515 547 525 544 g,1012 512 540 526 538 r,1014 529 550 538 544 r,1017 543 571 543 570 r,1020 550 571 566 570 r,1022 538 567 553 566 g,1024 522 553 535 551 g,
1026 519 540 530 536 g,1029 528 535 529 531 r,1031 529 556 530 554 r,1034 547 569 554 567 r,1036 529 570 542 568 g,1039 535 547 542 546 g,1041 494 521 504 515 g,1043 500 518 505 509 r,1046 507 531 508 525 r,1048 512 528 522 526 g,1050 509 529 522 526 r,1053 520 529 523 525 g,
1055 508 526 519 524 g,1058 515 524 519 521 r,1060 474 524 486 523 g,1063 481 495 486 488 g,1065 475 488 479 487 g,1067 466 481 473 477 g,1070 468 482 473 479 r,1072 475 487 478 487 r,1075 486 497 487 491 g,1077 473 492 474 490 g,1080 438 484 441 476 g,1082 439 454 443 448 r,
1084 442 458 447 455 r,1087 435 456 445 455 g,1089 439 462 444 460 r,1092 459 482 460 477 r,1094 465 503 475 478 g,1097 473 480 475 478 r,1099 458 524 465 505 r,1101 489 507 499 505 g,1104 487 508 490 500 g,1106 488 502 490 496 r,1109 465 497 465 497 g,1111 464 480 465 475 r,
1113 459 479 462 474 g,1116 454 463 462 463 g,1118 476 518 493 516 r,1121 505 526 508 516 g,1123 504 518 508 511 r,1126 505 515 508 511 g,1128 506 514 508 510 g,1130 505 515 508 510 r,1133 502 511 503 510 g,1135 502 512 505 511 r,1138 498 531 505 509 g,1140 497 519 504 508 g,
1142 504 516 506 508 r,1145 505 516 506 514 r,1147 513 520 514 517 r,1150 512 524 517 523 r,1152 520 550 523 549 r,1155 535 551 536 548 g,1157 514 543 526 540 r,1159 525 547 533 541 r,1162 541 569 542 552 r,1164 543 556 546 552 g,1167 539 552 544 547 r,1169 538 553 543 549 g,
1172 541 553 545 549 r,1174 547 554 548 549 r,1176 477 540 486 534 g,1179 465 487 476 484 g,1181 455 476 460 475 g,1184 426 463 440 461 g,1186 432 455 434 440 g,1188 430 445 433 435 g,1191 414 436 416 434 g,1193 406 418 407 417 g,1196 393 443 407 432 r,1198 397 436 412 432 g,
1201 399 419 412 415 r,1203 412 441 415 430 r,1205 427 443 430 438 r,1208 432 460 439 458 r,1210 450 470 455 458 g,1212 453 459 455 457 r,1215 448 497 451 481 g,1218 441 467 452 464 r,1220 462 479 464 477 r,1222 455 478 462 477 g,1225 449 472 457 460 g,1227 453 477 458 468 r,
1230 456 472 459 468 g,1232 449 463 449 460 g,1234 453 490 454 481 r,1237 477 497 481 490 r,1239 478 497 488 491 r,1242 489 504 492 499 r,1244 496 511 499 506 r,1247 502 512 505 507 r,1249 503 521 505 520 r,1251 515 523 520 522 r,1254 477 531 489 524 g,1256 481 505 489 500 r,
1259 490 506 496 503 r,1261 500 520 503 518 r,1264 518 526 519 524 r,1266 519 527 521 524 r,1268 517 531 521 525 r,1271 524 527 525 526 g,1273 446 478 452 472 g,1276 440 455 445 454 g,1278 429 449 440 445 g,1280 433 449 438 445 r,1283 428 442 436 442 r,1285 435 447 438 441 g,
1288 434 445 438 441 g,1290 433 440 436 440 g,1293 396 456 413 443 r,1295 399 446 427 443 g,1297 417 434 422 430 g,1300 415 423 418 422 g,1302 412 425 418 424 r,1305 420 425 421 423 g,1307 407 423 415 420 g,1310 412 420 415 416 g,1312 423 438 429 431 g,1314 430 445 432 442 r,
1317 434 443 441 443 g,1319 435 442 438 441 g,1322 434 442 436 440 g,1324 424 440 431 434 g,1326 415 433 429 431 g,1329 419 438 425 430 g,1331 442 484 449 475 r,1334 459 476 469 475 g,1336 464 474 468 471 g,1339 461 477 464 473 g,1341 464 476 466 473 r,1343 470 486 473 477 r,
1346 472 480 476 478 r,1348 476 480 477 478 r,1351 489 527 492 521 r,1353 512 525 515 521 g,1356 510 523 513 521 r,1358 512 522 519 520 r,1360 504 520 505 519 g,1363 504 513 506 511 r,1365 510 522 512 521 r,1368 513 522 521 522 r,1370 525 556 529 554 r,1372 539 555 548 554 g,
1375 546 556 547 552 r,1377 546 553 547 551 g,1380 548 551 548 550 r,1382 524 550 528 549 g,1385 521 540 528 538 r,1387 535 546 537 545 r,1389 507 530 522 526 g,1392 521 535 522 526 r,1394 507 525 509 524 g,1397 488 512 490 509 g,1399 485 505 487 497 g,1402 481 492 483 488 g,
1404 478 489 483 487 g,1406 480 487 481 486 r,1409 495 524 503 513 r,1411 500 515 508 511 g,1414 506 513 508 510 g,1416 503 513 505 509 g,1418 500 511 503 508 g,1420 493 509 499 506 g,1422 477 504 480 498 g,1425 479 500 480 488 g,1428 458 498 482 493 r,1431 491 504 492 499 r,
1433 492 508 496 502 g,1435 493 514 494 511 r,1438 505 514 510 513 r,1440 509 515 510 513 g,1443 509 534 513 533 r,1445 528 533 531 532 g,1448 498 518 503 513 g,1450 494 509 503 505 r,1452 502 512 505 508 r,1455 504 514 507 511 g,1458 506 514 509 512 r,1461 509 519 511 516 r,
1464 512 524 514 520 r,1467 494 508 502 504 g,1470 498 512 504 509 r,1473 504 513 508 511 g,1476 509 524 513 523 r,1479 513 525 519 523 g,1481 516 530 518 522 r,1484 515 524 519 521 g,1486 516 567 519 562 r,1489 555 576 562 573 r,1492 563 576 567 573 g,1494 566 575 567 574 r,
1497 571 585 574 582 r,1499 575 581 578 580 g,1501 567 583 577 581 g,1504 577 584 578 582 r,1506 562 595 563 582 g,1508 560 583 565 581 r,1510 557 580 558 579 g,1513 553 567 557 565 g,1515 553 570 557 567 r,1518 555 566 560 565 g,1520 553 563 556 561 g,1523 551 558 553 554 g,
1525 572 603 586 599 g,1528 574 587 583 585 g,1530 583 592 584 590 r,1532 586 605 590 600 r,1535 590 606 600 604 r,1537 586 605 591 603 g,1540 588 604 589 604 r,1544 605 646 615 635 r,1547 632 656 635 652 r,1549 651 670 653 655 r,1552 655 668 656 663 r,1554 658 669 663 666 r`

const averages = [
  { color: '#fc0', points: '5,436 20,457 40,492 67,523 97,562 115,588 137,613 147,620 163,625 175,629 185,628 197,629 217,628 233,624 245,618 263,599 288,588 320,590 340,603 360,615 380,645 393,673 417,703 433,720 443,727 468,724 480,728 503,726 523,718 538,721 557,717 580,720 597,724 632,724 650,703 667,669 682,628 700,573 720,513 735,473 748,448 765,430 778,400 787,387 792,375 803,358 813,347 832,337 852,324 863,312 873,292 882,275 888,270 898,274 908,283 920,307 933,333 948,355 960,367 985,403 1003,443 1022,477 1043,502 1062,514 1083,520 1103,517 1117,507 1135,503 1142,498 1158,498 1175,501 1187,498 1202,490 1233,486 1271,487 1297,464 1308,461 1343,463 1360,469 1400,478 1415,485 1433,496 1453,510 1467,514 1487,515 1512,522 1527,530 1543,543 1555,560' },
  { color: '#00f', points: '5,483 18,497 33,528 45,558 55,570 67,586 93,593 110,615 127,632 136,648 147,648 158,647 168,650 175,645 187,620 197,615 218,601 225,603 237,609 253,592 270,571 283,566 305,581 313,590 323,603 333,623 347,650 362,675 370,692 387,715 393,728 410,757 430,760 442,747 455,722 473,697 490,695 503,705 517,723 530,735 540,745 547,743 570,725 587,705 593,703 613,715 632,724 647,697 655,669 663,627 673,570 682,503 690,457 695,430 703,387 712,360 722,347 729,352 742,380 752,420 758,447 763,457 768,457 773,447 780,438 788,407 795,367 803,310 808,267 813,240 819,222 837,224 847,243 857,277 867,303 877,310 883,309 895,317 915,337 930,372 950,413 963,427 977,453 987,473 1003,510 1020,542 1035,547 1043,542 1063,531 1080,508 1088,490 1098,483 1117,474 1127,480 1142,496 1157,506 1167,522 1175,527 1180,525 1197,497 1207,478 1217,458 1225,445 1232,444 1240,453 1253,475 1271,496 1283,492 1297,478 1310,452 1320,435 1328,432 1348,445 1360,468 1373,490 1385,513 1399,526 1413,522 1423,515 1438,501 1460,507 1473,507 1490,520 1508,543 1522,553 1533,572 1547,583 1555,597' },
  { color: '#f0f', points: '83,467 105,467 125,472 135,477 170,487 190,489 223,501 250,506 277,514 303,529 323,539 347,556 363,565 380,579 407,601 440,621 477,637 503,648 540,661 570,668 610,673 633,677 652,676 674,669 690,661 710,649 730,641 745,638 759,638 772,632 788,622 820,591 840,574 863,556 887,532 903,518 928,502 973,479 1013,463 1032,456 1062,445 1083,434 1117,416 1133,413 1155,413 1172,422 1190,427 1220,429 1250,428 1272,438 1300,454 1333,464 1357,473 1380,483 1400,488 1433,493 1457,496 1502,494 1540,498 1555,503' },
  { color: '#0f0', points: '5,501 13,508 25,545 37,583 43,593 50,582 60,587 69,580 82,592 93,613 109,641 113,630 118,631 128,645 135,667 143,655 153,639 158,643 167,646 175,628 187,587 193,600 199,604 203,602 213,609 227,618 233,615 247,572 260,554 264,553 275,563 280,580 293,593 302,588 313,601 322,622 330,657 340,678 348,683 360,678 367,702 380,730 390,758 402,776 413,760 425,747 433,732 440,730 450,703 463,682 470,683 480,705 497,717 513,736 523,738 535,761 543,747 553,717 567,710 577,699 587,702 593,712 598,723 603,720 613,729 623,720 632,730 638,687 642,669 652,620 660,557 670,503 676,430 682,400 690,368 695,345 705,340 713,353 718,368 727,367 730,363 733,400 740,433 748,473 756,509 759,509 767,467 770,430 772,400 775,367 787,313 792,267 797,230 802,203 807,189 809,195 813,195 819,208 822,223 828,250 833,270 842,283 852,295 857,312 864,336 870,310 878,307 887,308 897,322 905,347 912,373 923,395 935,417 952,431 963,436 972,457 980,490 990,532 997,537 1008,542 1013,538 1020,551 1025,543 1030,542 1035,548 1043,532 1058,524 1068,497 1078,488 1083,472 1089,463 1097,473 1102,483 1107,487 1117,473 1125,493 1135,503 1147,508 1153,520 1162,532 1174,543 1182,510 1193,452 1202,435 1205,434 1213,443 1220,457 1233,459 1243,477 1252,498 1258,498 1271,516 1277,493 1287,467 1297,443 1310,426 1317,433 1329,432 1333,447 1348,467 1355,490 1368,508 1375,527 1382,537 1390,537 1400,517 1406,501 1417,505 1428,494 1433,497 1445,513 1452,511 1473,512 1485,517 1497,550 1507,568 1523,562 1530,575 1542,590 1550,620 1555,636' }
]

// dashed supports and resistances: start x, y
const levels = [[1198, 396], [1252, 487], [905, 583], [402, 633], [540, 673], [588, 752]]

const dates = [
  [5, 'Mar 04 14:00'], [164, 'Mar 16 16:00'], [322, 'Mar 26 17:00'], [479, 'Abr 09 10:00'], [636, 'Abr 22 11:00'],
  [795, 'Mai 05 12:00'], [951, 'Mai 15 13:00'], [1109, 'Mai 27 14:00'], [1266, 'Jun 09 15:00'], [1423, 'Jun 19 16:00']
]

const tags = [
  [503, '17.20', '#f0f', '#0f0'], [559, '16.67', '#fc0', '#03f'], [596, '16.32', '#00f', '#ff0'],
  [635, '15.96', '#0f0', '#f0f'], [663, '15.70', '#fff', '#000']
]

function rect(x, y, w, h, fill) {
  return `<rect x="${x}" y="${y}" width="${w}" height="${h}" fill="${fill}"/>`
}

function drawCandles() {
  let str = ''
  candles.trim().split(',').forEach((row) => {
    const [x, high, low, top, bottom, dir] = row.trim().split(' ')
    const up = dir === 'g'
    const h = Math.max(bottom - top, 1)
    str += rect(x, high, 1, low - high, '#fff')
    str += rect(x - 1, top, 1, h, up ? '#0f0' : '#f00')
    str += rect(x, top, 1, h, up ? '#1ec81e' : '#c81e1e')
    str += rect(+x + 1, top, 1, h, '#555')
  })
  return str
}

function drawAxes() {
  let str = rect(1556, 87, 1, 734, '#fff') + rect(4, 822, 1592, 1, '#fff')
  for (let i = 0; i <= 22; i += 1) {
    const y = 97 + i * 32
    str += rect(1557, y, 6, 1, '#fff') + rect(1557, y + 16, 3, 1, '#fff')
    str += `<text x="1567" y="${y + 4}" fill="#fff">${(21 - i * 0.3).toFixed(2)}</text>`
  }
  dates.forEach(([x, label]) => {
    str += rect(x, 822, 1, 12, '#fff') + `<text x="${x + 3}" y="833" fill="#fff">${label}</text>`
  })
  return str
}

function drawChart() {
  let str = '<g shape-rendering="crispEdges">' + drawCandles()
  averages.forEach((a) => {
    str += `<polyline points="${a.points}" fill="none" stroke="${a.color}"/>`
  })
  levels.forEach(([x, y]) => {
    str += `<line x1="${x}" y1="${y + 0.5}" x2="1555" y2="${y + 0.5}" stroke="#fff" stroke-dasharray="3 3"/>`
  })
  str += '<path d="M434 516L475 528L458 623ZM1308 682L1296 731L1330 728Z" fill="none" stroke="#fff"/></g>'
  str += drawAxes()
  tags.forEach(([y, label, fill, color]) => {
    str += `<path d="M1557 ${y}L1564 ${y - 7}H1596V${y + 8}H1564Z" fill="${fill}"/>`
    str += `<text x="1567" y="${y + 4}" fill="${color}">${label}</text>`
  })
  chart.innerHTML = str
}

drawChart()
```
